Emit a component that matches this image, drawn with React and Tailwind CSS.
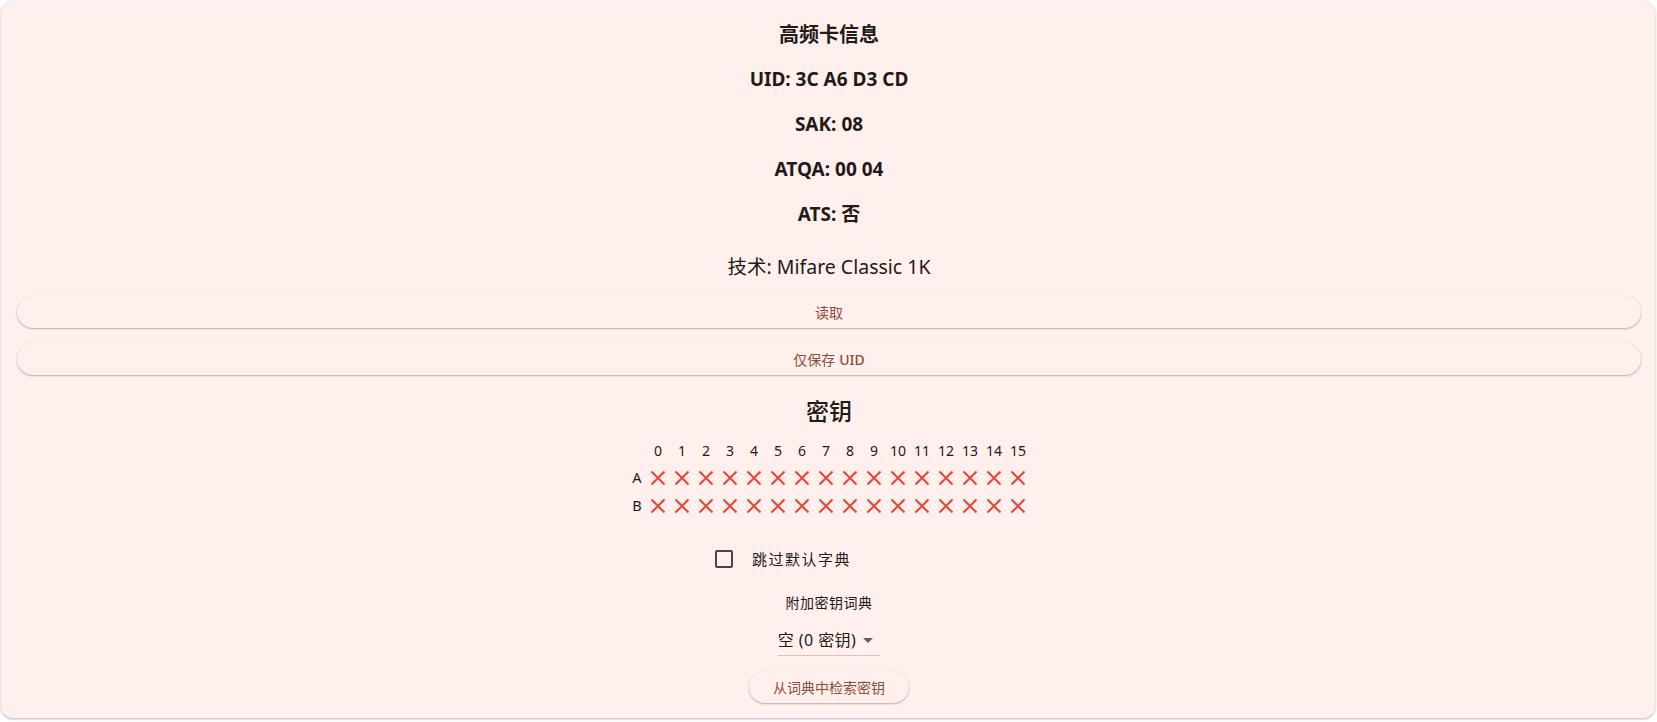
import { useState } from 'react';

const FONT = { fontFamily: '"Noto Sans", "Noto Sans CJK SC", sans-serif' };

const COLS = Array.from({ length: 16 }, (_, i) => i);

function Cross() {
  return (
    <svg width="24" height="24" viewBox="0 0 24 24" className="block">
      <path d="M5.5 5.5 L18.5 18.5 M18.5 5.5 L5.5 18.5" stroke="#e5453b" strokeWidth="2.1" fill="none" />
    </svg>
  );
}

function ElevatedButton({ children, className = '' }) {
  return (
    <button
      className={`h-[32px] rounded-full bg-[#fff0ed] text-[14px] text-[#8f4c38] shadow-[0_1px_2px_rgba(0,0,0,0.28),0_0_1px_rgba(0,0,0,0.12)] flex items-center justify-center ${className}`}
    >
      {children}
    </button>
  );
}

export default function App() {
  const [skipDefault, setSkipDefault] = useState(false);

  return (
    <div className="min-h-screen bg-white pl-[1px] pt-[1px]" style={FONT}>
      <div className="w-[1654px] h-[717px] rounded-[12px] bg-[#fff0ed] shadow-[0_1px_3px_rgba(0,0,0,0.3)] pl-[16px] pr-[14px] pt-[11px] flex flex-col text-[#231917]">
        {/* 卡片信息 */}
        <div className="h-[45px] flex items-center justify-center text-[20px] font-bold">高频卡信息</div>
        <div className="h-[45px] flex items-center justify-center text-[19px] font-bold">UID: 3C A6 D3 CD</div>
        <div className="h-[45px] flex items-center justify-center text-[19px] font-bold">SAK: 08</div>
        <div className="h-[45px] flex items-center justify-center text-[19px] font-bold">ATQA: 00 04</div>
        <div className="h-[45px] flex items-center justify-center text-[19px] font-bold">ATS: 否</div>
        <div className="h-[59px] flex items-center justify-center text-[19.5px]">技术: Mifare Classic 1K</div>

        <ElevatedButton className="w-full">读取</ElevatedButton>
        <ElevatedButton className="w-full mt-[15px]">
          仅保存 <span className="ml-[4px] font-medium">UID</span>
        </ElevatedButton>

        {/* 密钥 */}
        <div className="mt-[11px] h-[50px] flex items-center justify-center text-[23px] font-medium">密钥</div>

        <div className="flex justify-center">
          <div className="flex flex-col text-[14px]">
            <div className="h-[28px] flex items-center">
              <div className="w-[18px]" />
              {COLS.map((c) => (
                <div key={c} className="w-[24px] text-center">{c}</div>
              ))}
            </div>
            {['A', 'B'].map((row) => (
              <div key={row} className="h-[28px] flex items-center">
                <div className="w-[18px] text-center text-[14.5px]">{row}</div>
                {COLS.map((c) => (
                  <div key={c} className="w-[24px] flex justify-center">
                    <Cross />
                  </div>
                ))}
              </div>
            ))}
          </div>
        </div>

        {/* 跳过默认字典 */}
        <div className="mt-[19px] h-[40px] flex justify-center">
          <div className="w-[250px] flex items-center">
            <button
              onClick={() => setSkipDefault(!skipDefault)}
              className="w-[40px] h-[40px] flex items-center justify-center"
            >
              <span className="w-[18px] h-[18px] border-2 border-[#53433f] rounded-[2px]" />
            </button>
            <span className="ml-[8px] text-[15px] tracking-[1.5px]">跳过默认字典</span>
          </div>
        </div>

        <div className="mt-[11px] h-[24px] flex items-center justify-center text-[14px] tracking-[0.5px]">附加密钥词典</div>

        <div className="mt-[8px] flex justify-center">
          <div className="h-[34px] pt-[3px] flex items-center border-b border-[#d8c2bc]">
            <span className="text-[16px] tracking-[0.4px]">空 (0 密钥)</span>
            <svg width="24" height="24" viewBox="0 0 24 24" className="block">
              <path d="M7 10l5 5 5-5z" fill="#6b5c58" />
            </svg>
          </div>
        </div>

        <div className="mt-[15px] flex justify-center">
          <ElevatedButton className="px-[24px]">从词典中检索密钥</ElevatedButton>
        </div>
      </div>
    </div>
  );
}
